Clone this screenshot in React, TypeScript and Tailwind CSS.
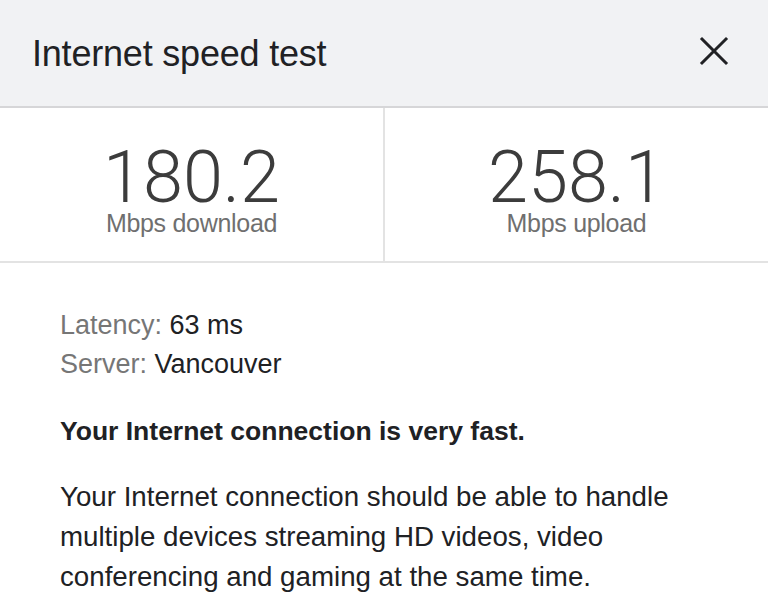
import React from "react";

export default function App() {
  return (
    <div className="w-[768px] h-[602px] bg-white overflow-hidden" style={{ fontFamily: '"Liberation Sans", Arial, sans-serif' }}>
      <div className="h-[108px] bg-[#f1f2f4] flex items-center justify-between pl-[32px] pr-[39px] border-b-2 border-[#d6d6d8]">
        <div className="text-[36px] leading-[40px] text-[#202124] tracking-[-0.2px] mb-[-2px]">Internet speed test</div>
        <svg width="30" height="30" viewBox="0 0 30 30" className="text-[#202124] mt-[-5px]">
          <path d="M3 3 L27 27 M27 3 L3 27" stroke="currentColor" strokeWidth="3" strokeLinecap="square" />
        </svg>
      </div>
      <div className="flex h-[155px] border-b-2 border-[#e3e3e3]">
        <div className="flex-1 flex flex-col items-center pt-[40px] border-r-2 border-[#e3e3e3]">
          <div className="text-[72px] leading-[60px] font-light text-[#3c3c3c]" style={{ fontFamily: 'Roboto, sans-serif' }}>180.2</div>
          <div className="text-[25px] leading-[28px] text-[#6f6f6f] mt-[1px] tracking-[-0.3px]">Mbps download</div>
        </div>
        <div className="flex-1 flex flex-col items-center pt-[40px]">
          <div className="text-[72px] leading-[60px] font-light text-[#3c3c3c]" style={{ fontFamily: 'Roboto, sans-serif' }}>258.1</div>
          <div className="text-[25px] leading-[28px] text-[#6f6f6f] mt-[1px] tracking-[-0.3px]">Mbps upload</div>
        </div>
      </div>
      <div className="pl-[60px] pt-[43px] text-[27px] text-[#202124]">
        <div className="leading-[39px]"><span className="text-[#767676]">Latency:</span> 63 ms</div>
        <div className="leading-[39px]"><span className="text-[#767676]">Server:</span> Vancouver</div>
        <div className="leading-[39px] font-semibold mt-[28px] text-[26.5px]">Your Internet connection is very fast.</div>
        <div className="leading-[40px] mt-[26px] w-[660px] text-[27.7px]">
          Your Internet connection should be able to handle multiple devices streaming HD videos, video conferencing and gaming at the same time.
        </div>
      </div>
    </div>
  );
}
